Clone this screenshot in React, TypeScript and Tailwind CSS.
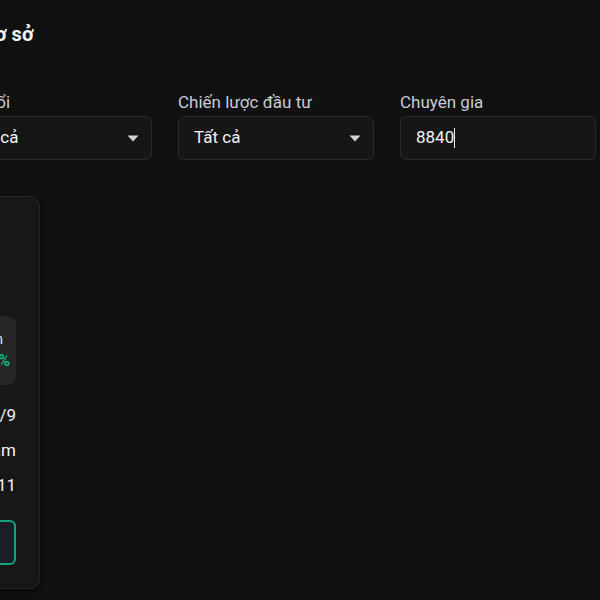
import React from "react";

function Caret() {
  return (
    <svg width="12" height="7" viewBox="0 0 12 7" className="shrink-0">
      <path d="M0.5 0.5 L11.5 0.5 L6 6.5 Z" fill="#d4d4d8" />
    </svg>
  );
}

function Field({ label, children }: { label: string; children: React.ReactNode }) {
  return (
    <div className="flex flex-col">
      <div className="h-[24px] leading-[24px] text-[17px] text-[#c8ccd6] mb-[2px] whitespace-nowrap">{label}</div>
      {children}
    </div>
  );
}

function SelectBox({ value }: { value: string }) {
  return (
    <div className="h-[44px] rounded-md border border-[#2a2a2a] bg-[#161616] flex items-center justify-between pl-[15px] pr-[12px]">
      <span className="text-[17px] text-[#f2f2f2] whitespace-nowrap">{value}</span>
      <Caret />
    </div>
  );
}

export default function App() {
  return (
    <div
      className="w-[600px] h-[600px] overflow-hidden bg-[#111111]"
      style={{ fontFamily: "Roboto, 'Noto Sans', sans-serif" }}
    >
      <div className="-ml-[44px] w-[700px] pt-[20px]">
        <h1 className="-ml-[6px] text-[20px] leading-[28px] font-bold text-[#f5f5f5] whitespace-nowrap">Giá cơ sở</h1>

        <div className="mt-[42px] grid grid-cols-[196px_196px_196px] gap-x-[26px]">
          <Field label="Độ tuổi">
            <SelectBox value="Tất cả" />
          </Field>
          <Field label="Chiến lược đầu tư">
            <SelectBox value="Tất cả" />
          </Field>
          <Field label="Chuyên gia">
            <div className="h-[44px] rounded-md border border-[#2a2a2a] bg-[#161616] flex items-center pl-[15px]">
              <span className="text-[17px] text-[#f2f2f2]">8840</span>
              <span className="w-[1px] h-[20px] bg-[#f2f2f2]" />
            </div>
          </Field>
        </div>

        <div className="mt-[36px] -ml-[216px] w-[300px] h-[393px] rounded-[10px] border border-[#262626] bg-[#171717] shadow-[0_2px_8px_rgba(0,0,0,0.6)] p-[23px] flex flex-col">
          <div className="h-[78px] flex items-center gap-3">
            <div className="w-[56px] h-[56px] rounded-full bg-[#2a2a2a]" />
            <div className="flex flex-col">
              <span className="text-[17px] font-semibold text-[#f2f2f2]">Chuyên gia</span>
              <span className="text-[14px] text-[#9ca3af]">8840</span>
            </div>
          </div>

          <div className="mt-[19px] h-[70px] rounded-lg bg-[#262626] grid grid-cols-2 items-center">
            <div className="flex flex-col items-center">
              <span className="text-[14px] leading-[20px] text-[#d4d4d8]">Tỷ lệ thắng</span>
              <span className="text-[16px] leading-[24px] font-bold text-[#22c55e]">78%</span>
            </div>
            <div className="flex flex-col items-end pr-[6px]">
              <span className="text-[14px] leading-[20px] text-[#e5e5e5] mr-[7px]">Lợi nhuận</span>
              <span className="text-[16px] leading-[24px] font-bold text-[#10b981]">+12.5%</span>
            </div>
          </div>

          <div className="mt-[18px] flex flex-col gap-[11px] text-[17px]">
            <div className="h-[24px] flex justify-between items-center">
              <span className="text-[#9ca3af]">Đánh giá</span>
              <span className="text-[#f2f2f2]">7/9</span>
            </div>
            <div className="h-[24px] flex justify-between items-center">
              <span className="text-[#9ca3af]">Kinh nghiệm</span>
              <span className="text-[#f2f2f2]">5 năm</span>
            </div>
            <div className="h-[24px] flex justify-between items-center">
              <span className="text-[#9ca3af]">Số bài viết</span>
              <span className="text-[#f2f2f2]">11</span>
            </div>
          </div>

          <div className="mt-[23px] h-[45px] rounded-md border-2 border-[#16a37a] bg-[#1b1d2b] flex items-center justify-center text-[16px] text-[#f2f2f2]">
            Xem chi tiết
          </div>
        </div>
      </div>
    </div>
  );
}
